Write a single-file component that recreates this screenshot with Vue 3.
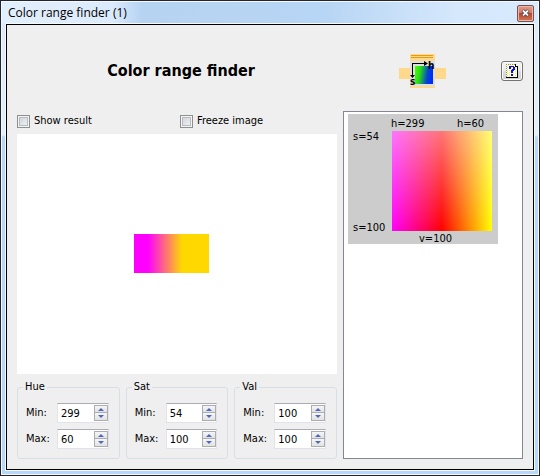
<script setup>
import { ref, reactive } from 'vue'

const showResult = ref(false)
const freezeImage = ref(false)

const ranges = reactive([
  { name: 'Hue', limit: 359, min: 299, max: 60 },
  { name: 'Sat', limit: 100, min: 54, max: 100 },
  { name: 'Val', limit: 100, min: 100, max: 100 },
])
const bounds = [
  { key: 'min', label: 'Min:' },
  { key: 'max', label: 'Max:' },
]

function step(range, key, delta) {
  range[key] = Math.min(range.limit, Math.max(0, range[key] + delta))
}
</script>

<template>
  <div class="window">
    <header class="titlebar">
      <span class="caption">Color range finder (1)</span>
      <button class="close" type="button" aria-label="Close">
        <svg width="9" height="8" viewBox="0 0 9 8" aria-hidden="true">
          <path d="M1.7 1.5 L7.3 6.5 M7.3 1.5 L1.7 6.5" stroke="#4b4f5e" stroke-width="3.6" />
          <path d="M2 1.7 L7 6.3 M7 1.7 L2 6.3" stroke="#fff" stroke-width="1.8" />
        </svg>
      </button>
    </header>

    <main class="panel">
      <div class="head">
        <h1>Color range finder</h1>
        <svg class="logo" width="48" height="34" viewBox="0 0 48 34" aria-hidden="true">
          <defs>
            <linearGradient id="logoFill" x2="1" y2="0.15">
              <stop offset="0" stop-color="#4f0" />
              <stop offset="0.3" stop-color="#2be010" />
              <stop offset="0.75" stop-color="#0746c8" />
              <stop offset="1" stop-color="#002cff" />
            </linearGradient>
          </defs>
          <rect x="0" y="14" width="11" height="11" fill="#ffd98b" />
          <rect x="36" y="14" width="11" height="11" fill="#ffd98b" />
          <rect x="11" y="0" width="25" height="34" fill="#ffd98b" />
          <rect x="12" y="1" width="22" height="1" fill="#e89a10" />
          <rect x="12" y="3" width="22" height="1" fill="#e89a10" />
          <rect x="11" y="7" width="25" height="25" fill="#dedede" />
          <rect x="16" y="12" width="18" height="18" fill="url(#logoFill)" />
          <path d="M13 22 V9 H26 V10 H14 V22 Z" fill="#000" />
          <path d="M25 7 L29 9.5 L25 12 Z M11 21 H16 L13.5 24 Z" fill="#000" />
          <text class="axis" x="29" y="15">h</text>
          <text class="axis" x="11" y="31">s</text>
        </svg>
        <button class="help" type="button" aria-label="Help">
          <svg width="12" height="14" viewBox="0 0 12 14" shape-rendering="crispEdges" aria-hidden="true">
            <path d="M0 0 H9 L12 3 V14 H0 Z" fill="#fffef0" />
            <path d="M1.5 1 V13 M3.5 0 V13 M5.5 1 V13 M7.5 0 V13 M9.5 1 V13" stroke="#f6ec50" stroke-dasharray="1 1" />
            <path d="M0.5 0 V13 M0 0.5 H9" fill="none" stroke="#8a8a8a" stroke-dasharray="1 1" />
            <path d="M0 13.5 H11.5 V2.5 H9.5 V0" fill="none" stroke="#000" />
            <path d="M3 2 H8 V3 H9 V6 H8 V7 H7 V9 H5 V6 H6 V5 H7 V3 H5 V5 H3 Z" fill="#0a10e0" />
            <rect x="5" y="10" width="2" height="2" fill="#0a10e0" />
          </svg>
        </button>
      </div>

      <div class="content">
        <section class="left">
          <div class="options">
            <label><input v-model="showResult" type="checkbox" />Show result</label>
            <label><input v-model="freezeImage" type="checkbox" />Freeze image</label>
          </div>

          <div class="canvas"><div class="sample"></div></div>

          <div class="groups">
            <fieldset v-for="range in ranges" :key="range.name">
              <legend>{{ range.name }}</legend>
              <div v-for="b in bounds" :key="b.key" class="row">
                <label :for="range.name + b.key">{{ b.label }}</label>
                <div class="spin">
                  <input :id="range.name + b.key" v-model.number="range[b.key]" type="text" inputmode="numeric" />
                  <div class="arrows">
                    <button type="button" aria-label="Increase" @click="step(range, b.key, 1)">
                      <svg width="6" height="3" viewBox="0 0 6 3"><path d="M3 0 L6 3 H0 Z" /></svg>
                    </button>
                    <button type="button" aria-label="Decrease" @click="step(range, b.key, -1)">
                      <svg width="6" height="3" viewBox="0 0 6 3"><path d="M3 3 L6 0 H0 Z" /></svg>
                    </button>
                  </div>
                </div>
              </div>
            </fieldset>
          </div>
        </section>

        <section class="list">
          <svg class="chart" width="150" height="130" viewBox="0 0 150 130">
            <defs>
              <linearGradient id="hueScale">
                <stop offset="0" stop-color="#ff00fb" />
                <stop offset="0.5" stop-color="#f00" />
                <stop offset="1" stop-color="#ff0" />
              </linearGradient>
              <linearGradient id="satScale" x1="0" y1="0" x2="0" y2="1">
                <stop offset="0" stop-color="#fff" stop-opacity="0.46" />
                <stop offset="1" stop-color="#fff" stop-opacity="0" />
              </linearGradient>
            </defs>
            <rect width="150" height="130" fill="#ccc" />
            <rect x="44" y="17" width="100" height="100" fill="url(#hueScale)" />
            <rect x="44" y="17" width="100" height="100" fill="url(#satScale)" />
            <text x="43" y="13">h=299</text>
            <text x="109" y="13">h=60</text>
            <text x="5" y="26">s=54</text>
            <text x="5" y="117">s=100</text>
            <text x="71" y="128">v=100</text>
          </svg>
        </section>
      </div>
    </main>
  </div>
</template>

<style>
body {
  margin: 0;
}
</style>

<style scoped>
* {
  box-sizing: border-box;
}
.window {
  min-height: 100vh;
  display: flex;
  flex-direction: column;
  padding: 0 4px 4px;
  border: 1px solid #24252e;
  box-shadow: inset 0 0 0 1px #f2f9ff;
  background: linear-gradient(#d9eafc 0, #e2effc 134px, #b9d7f6 136px, #b9d7f6 100%);
  font: 11px/14px "DejaVu Sans Condensed", "DejaVu Sans", sans-serif;
  color: #000;
}
.titlebar {
  height: 21px;
  margin: 1px -3px 0;
  padding: 1px 4px 0 6px;
  display: flex;
  align-items: center;
  justify-content: space-between;
  background: linear-gradient(90deg, #e2effc 0, #dcebfb 110px, #b7d3f2 140px, #b7d5f4 60%, #d5e8fc 85%, #d9eafc 100%);
}
.caption {
  font: 12px/16px "Open Sans", sans-serif;
}
.close {
  width: 17px;
  height: 17px;
  padding: 0;
  display: grid;
  place-items: center;
  border: 1px solid #6f5458;
  border-radius: 2px;
  box-shadow: inset 0 0 0 1px #efb5a5;
  background: linear-gradient(#e39b88 0, #d27a64 45%, #b8432a 50%, #cf7757 100%);
}
.panel {
  flex: 1;
  display: flex;
  flex-direction: column;
  padding: 0 10px 10px;
  margin: 1px;
  border: 1px solid #000;
  box-shadow: 0 0 0 1px #f5faff;
  background: #efefef;
}
.head {
  height: 86px;
  padding-top: 6px;
  display: grid;
  grid-template-columns: 328fr 156fr 22px;
  align-items: center;
  justify-items: center;
}
h1 {
  margin: 0;
  font: bold 16px/22px "DejaVu Sans Condensed", "DejaVu Sans", sans-serif;
}
.axis {
  font: bold 10px "DejaVu Sans Condensed", "DejaVu Sans", sans-serif;
}
.help {
  width: 22px;
  height: 20px;
  padding: 0;
  display: grid;
  place-items: center;
  border: 1px solid #747474;
  border-radius: 3px;
  box-shadow: inset 0 0 0 1px #fbfbfb;
  background: linear-gradient(#f2f2f2 0, #ebebeb 50%, #dcdcdc 50%, #cfcfcf 100%);
}
.content {
  flex: 1;
  display: grid;
  grid-template-columns: 320fr 180fr;
  gap: 6px;
}
.left {
  display: flex;
  flex-direction: column;
  gap: 6px;
  min-width: 0;
}
.options {
  display: grid;
  grid-template-columns: 1fr 1fr;
  gap: 6px;
  height: 17px;
  align-items: end;
}
.options label {
  display: flex;
  align-items: center;
  gap: 4px;
}
.options input {
  appearance: none;
  width: 13px;
  height: 13px;
  margin: 0;
  border: 1px solid #8e8f8f;
  box-shadow: inset 0 0 0 1px #f4f4f4, inset 0 0 0 2px #b6bbc2;
  background: linear-gradient(135deg, #cbcfd5, #f6f6f6);
}
.options input:checked {
  background: #3a5fa8;
}
.canvas {
  flex: 1;
  display: grid;
  place-items: center;
  padding-right: 11px;
  padding-bottom: 1px;
  background: #fff;
}
.sample {
  width: 75px;
  height: 39px;
  background: linear-gradient(90deg, #f0f 0, #f0f 14px, #ffd800 48px, #ffd800 100%);
}
.groups {
  display: grid;
  grid-template-columns: 1fr 1fr 1fr;
  gap: 6px;
}
fieldset {
  min-width: 0;
  margin: 0;
  padding: 9px 10px 9px 8px;
  border: 1px solid #d5dfe5;
  border-radius: 3px;
}
legend {
  margin-left: -3px;
  padding: 0 2px;
}
.row {
  display: flex;
  align-items: center;
}
.row + .row {
  margin-top: 6px;
}
.row label {
  width: 31px;
}
.spin {
  flex: 1;
  min-width: 0;
  height: 20px;
  display: flex;
  padding: 1px 0 1px 2px;
  border: 1px solid #e2e3ea;
  border-top-color: #abadb3;
  background: #fff;
}
.spin input {
  flex: 1;
  min-width: 0;
  width: 0;
  padding: 1px 0 0 1px;
  border: 0;
  outline: 0;
  background: none;
  font: inherit;
  color: inherit;
}
.arrows {
  width: 14px;
  display: grid;
  grid-template-rows: 1fr 1fr;
}
.arrows button {
  padding: 0;
  display: grid;
  place-items: center;
  border: 1px solid #abadb3;
  background: linear-gradient(#f6f6f6, #e2e2e2);
}
.arrows button + button {
  border-top: 0;
}
.arrows path {
  fill: #5068b8;
}
.list {
  padding: 2px 4px;
  border: 1px solid #828790;
  background: #fff;
}
.chart {
  display: block;
}
</style>
